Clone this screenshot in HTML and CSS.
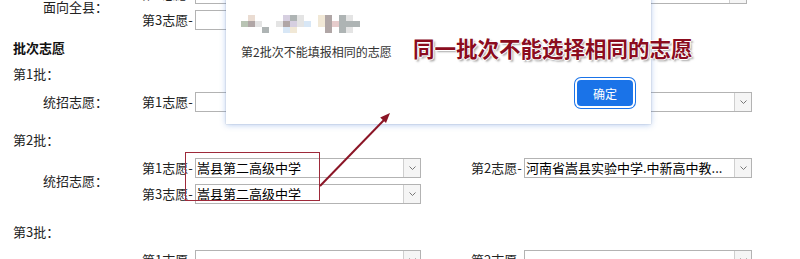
FILE: index.html
```html
<!DOCTYPE html>
<html lang="zh-CN">
<head>
    <meta charset="UTF-8">
    <title>批次志愿</title>
    <link rel="stylesheet" href="styles.css">
</head>
<body>
    <div class="page">
        <div class="group group-first">
            <div class="group-label">面向全县：</div>
            <div class="choices">
                <div class="choice">
                    <span class="choice-label">第1志愿-</span>
                    <div class="sel"><span class="sel-text"></span><span class="sel-btn"><svg width="7" height="4" viewBox="0 0 7 4"><polyline points="0.5,0.5 3.5,3.5 6.5,0.5"/></svg></span></div>
                </div>
                <div class="choice">
                    <span class="choice-label">第2志愿-</span>
                    <div class="sel sel-narrow"><span class="sel-text"></span><span class="sel-btn"><svg width="7" height="4" viewBox="0 0 7 4"><polyline points="0.5,0.5 3.5,3.5 6.5,0.5"/></svg></span></div>
                </div>
                <div class="choice">
                    <span class="choice-label">第3志愿-</span>
                    <div class="sel"><span class="sel-text"></span><span class="sel-btn"><svg width="7" height="4" viewBox="0 0 7 4"><polyline points="0.5,0.5 3.5,3.5 6.5,0.5"/></svg></span></div>
                </div>
            </div>
        </div>

        <div class="section-title">批次志愿</div>

        <div class="batch-title">第1批：</div>
        <div class="group">
            <div class="group-label">统招志愿：</div>
            <div class="choices">
                <div class="choice">
                    <span class="choice-label">第1志愿-</span>
                    <div class="sel"><span class="sel-text"></span><span class="sel-btn"><svg width="7" height="4" viewBox="0 0 7 4"><polyline points="0.5,0.5 3.5,3.5 6.5,0.5"/></svg></span></div>
                </div>
                <div class="choice">
                    <span class="choice-label">第2志愿-</span>
                    <div class="sel"><span class="sel-text"></span><span class="sel-btn"><svg width="7" height="4" viewBox="0 0 7 4"><polyline points="0.5,0.5 3.5,3.5 6.5,0.5"/></svg></span></div>
                </div>
            </div>
        </div>

        <div class="batch-title">第2批：</div>
        <div class="group">
            <div class="group-label">统招志愿：</div>
            <div class="choices">
                <div class="choice">
                    <span class="choice-label">第1志愿-</span>
                    <div class="sel"><span class="sel-text">嵩县第二高级中学</span><span class="sel-btn"><svg width="7" height="4" viewBox="0 0 7 4"><polyline points="0.5,0.5 3.5,3.5 6.5,0.5"/></svg></span></div>
                </div>
                <div class="choice">
                    <span class="choice-label">第2志愿-</span>
                    <div class="sel"><span class="sel-text">河南省嵩县实验中学.中新高中教...</span><span class="sel-btn"><svg width="7" height="4" viewBox="0 0 7 4"><polyline points="0.5,0.5 3.5,3.5 6.5,0.5"/></svg></span></div>
                </div>
                <div class="choice">
                    <span class="choice-label">第3志愿-</span>
                    <div class="sel"><span class="sel-text">嵩县第二高级中学</span><span class="sel-btn"><svg width="7" height="4" viewBox="0 0 7 4"><polyline points="0.5,0.5 3.5,3.5 6.5,0.5"/></svg></span></div>
                </div>
            </div>
        </div>

        <div class="batch-title">第3批：</div>
        <div class="group">
            <div class="group-label">统招志愿：</div>
            <div class="choices">
                <div class="choice">
                    <span class="choice-label">第1志愿-</span>
                    <div class="sel"><span class="sel-text"></span><span class="sel-btn"><svg width="7" height="4" viewBox="0 0 7 4"><polyline points="0.5,0.5 3.5,3.5 6.5,0.5"/></svg></span></div>
                </div>
                <div class="choice">
                    <span class="choice-label">第2志愿-</span>
                    <div class="sel"><span class="sel-text"></span><span class="sel-btn"><svg width="7" height="4" viewBox="0 0 7 4"><polyline points="0.5,0.5 3.5,3.5 6.5,0.5"/></svg></span></div>
                </div>
                <div class="choice">
                    <span class="choice-label">第3志愿-</span>
                    <div class="sel"><span class="sel-text"></span><span class="sel-btn"><svg width="7" height="4" viewBox="0 0 7 4"><polyline points="0.5,0.5 3.5,3.5 6.5,0.5"/></svg></span></div>
                </div>
            </div>
        </div>
    </div>

    <!-- alert dialog -->
    <div class="dialog">
        <div class="mosaic">
            <span></span><span class="m2"></span><span></span><span></span><span></span><span></span><span class="m5"></span><span class="m7"></span><span class="m4"></span><span></span><span></span><span class="m8"></span><span class="m3"></span><span></span><span class="m7"></span><span class="m4"></span><span></span>
            <span class="m1"></span><span class="m3"></span><span class="m4"></span><span></span><span></span><span class="m4"></span><span class="m3"></span><span class="m5"></span><span class="m4"></span><span class="m6"></span><span></span><span class="m8"></span><span class="m3"></span><span class="m9"></span><span class="m7"></span><span class="m7"></span><span class="m7"></span>
            <span></span><span></span><span></span><span class="m7"></span><span></span><span></span><span class="m6"></span><span class="m8"></span><span></span><span></span><span></span><span></span><span class="m3"></span><span></span><span class="m7"></span><span class="m4"></span><span></span>
        </div>
        <div class="dialog-msg">第2批次不能填报相同的志愿</div>
        <div class="dialog-actions">
            <button class="btn-ok">确定</button>
        </div>
    </div>

    <!-- annotations -->
    <div class="note">同一批次不能选择相同的志愿</div>
    <div class="mark-box"></div>
    <svg class="mark-arrow" width="800" height="259" viewBox="0 0 800 259">
        <line x1="320" y1="186" x2="384" y2="120"/>
        <polygon points="390,113 386,123 380.2,117.4"/>
    </svg>
</body>
</html>
```

FILE: styles.css
```css
html, body {
    margin: 0;
    padding: 0;
    background-color: #fff;
    overflow: hidden;
}
body {
    font-family: "Noto Sans CJK SC", "Noto Sans", sans-serif;
    font-size: 13px;
    color: #222;
    width: 800px;
    height: 259px;
    position: relative;
}
.page {
    padding-left: 13px;
}
.group {
    display: flex;
    margin-top: 8px;
    padding-left: 30px;
}
.group-first {
    margin-top: -16px;
}
.group-label {
    width: 99px;
    align-self: center;
    line-height: 20px;
    white-space: nowrap;
}
.choices {
    display: grid;
    grid-template-columns: 279px 281px;
    column-gap: 50px;
    row-gap: 6px;
}
.choice {
    display: flex;
    height: 20px;
}
.choice-label {
    width: 53px;
    line-height: 20px;
    white-space: nowrap;
}
.sel {
    flex: 1;
    display: flex;
    height: 20px;
    box-sizing: border-box;
    border: 1px solid #b3b3b3;
    background-color: #fff;
}
.sel-narrow {
    flex: none;
    width: 223px;
}
.sel-text {
    flex: 1;
    padding-left: 1px;
    line-height: 18px;
    color: #000;
    white-space: nowrap;
    overflow: hidden;
}
.sel-btn {
    width: 16px;
    border-left: 1px solid #cfcfcf;
    background-color: #f5f5f5;
    display: flex;
    align-items: center;
    justify-content: center;
}
.sel-btn svg polyline {
    fill: none;
    stroke: #777;
    stroke-width: 1;
}
.section-title {
    margin-top: 8px;
    line-height: 20px;
    font-weight: bold;
    color: #111;
}
.batch-title {
    margin-top: 6px;
    line-height: 20px;
}
.group + .batch-title {
    margin-top: 18px;
}

/* dialog */
.dialog {
    position: absolute;
    left: 226px;
    top: -12px;
    width: 425px;
    box-sizing: border-box;
    padding: 27px 15px 18px;
    background-color: #fff;
    box-shadow: 0 1px 6px rgba(90, 140, 220, 0.45), 0 0 1px rgba(0, 0, 0, 0.3);
}
.mosaic {
    display: grid;
    grid-template-columns: repeat(17, 7px);
    grid-auto-rows: 6px;
    filter: blur(0.5px);
    height: 18px;
}
.m1 { background-color: #b9c4b4; }
.m2 { background-color: #eadcd2; }
.m3 { background-color: #b0a6a6; }
.m4 { background-color: #e4e4e4; }
.m5 { background-color: #d6cfe0; }
.m6 { background-color: #d8e7f6; }
.m7 { background-color: #aeb4b4; }
.m8 { background-color: #f1e8d6; }
.m9 { background-color: #e6cccc; }
.dialog-msg {
    margin-top: 10px;
    font-size: 12px;
    line-height: 18px;
    color: #333;
}
.dialog-actions {
    display: flex;
    justify-content: flex-end;
    margin-top: 19px;
    padding-right: 3px;
}
.btn-ok {
    width: 56px;
    height: 26px;
    border: none;
    border-radius: 4px;
    background-color: #1a73e8;
    color: #fff;
    font-family: "Noto Sans CJK SC", sans-serif;
    font-size: 12px;
    padding: 0;
    box-shadow: 0 0 0 2px #fff, 0 0 0 3px #1a73e8;
}

/* annotations */
.note {
    position: absolute;
    left: 413px;
    top: 36px;
    font-size: 21.5px;
    line-height: 24px;
    font-weight: bold;
    color: #8b0c1e;
    white-space: nowrap;
    text-shadow: 1px 0 0 #fff, -1px 0 0 #fff, 0 1px 0 #fff, 0 -1px 0 #fff, 2px 2px 2px rgba(0, 0, 0, 0.35);
}
.mark-box {
    position: absolute;
    left: 185px;
    top: 152px;
    width: 135px;
    height: 49px;
    box-sizing: border-box;
    border: 1px solid #9e2a3a;
}
.mark-arrow {
    position: absolute;
    left: 0;
    top: 0;
}
.mark-arrow line {
    stroke: #8b1526;
    stroke-width: 2;
}
.mark-arrow polygon {
    fill: #8b1526;
}
```
